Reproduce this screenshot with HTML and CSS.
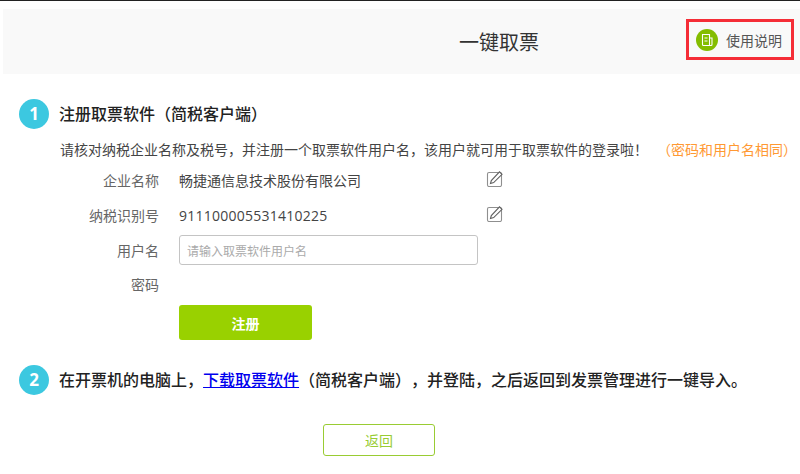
FILE: index.html
```html
<!DOCTYPE html>
<html lang="zh-CN">
<head>
<meta charset="utf-8">
<title>一键取票</title>
<link rel="stylesheet" href="styles.css">
</head>
<body>
<div class="page">
  <header class="header">
    <h1 class="title">一键取票</h1>
    <a class="help">
      <svg class="help-icon" viewBox="0 0 22 22" width="22" height="22" aria-hidden="true">
        <circle cx="11" cy="11" r="11" fill="#84bd00"/>
        <path d="M6.500 5.500h7v11h-6a1 1 0 0 1-1-1z M13.500 9h2.500v6.500a1 1 0 0 1-1 1h-1.500" fill="none" stroke="#fff" stroke-width="1.100"/>
        <path d="M8.500 9h3M8.500 12h3" stroke="#fff" stroke-width="1.100"/>
      </svg>
      <span>使用说明</span>
    </a>
  </header>

  <section class="step step-one">
    <div class="step-head">
      <span class="badge">1</span>
      <h2 class="step-title">注册取票软件（简税客户端）</h2>
    </div>
    <p class="desc">请核对纳税企业名称及税号<span class="punct">，</span>并注册一个取票软件用户名<span class="punct">，</span>该用户就可用于取票软件的登录啦<span class="punct">！</span><span class="note">（密码和用户名相同）</span></p>
    <div class="form">
      <div class="row row-company">
        <span class="label">企业名称</span>
        <span class="value">畅捷通信息技术股份有限公司</span>
        <svg class="edit" viewBox="0 0 17 17" width="17" height="17" aria-hidden="true">
          <rect x="1.500" y="2.500" width="14" height="14" rx="1.500" fill="#fff" stroke="#8f8f8f" stroke-width="1.100"/>
          <path d="M4.500 13.500l.8-3L13.500 1.800l2.500 2.500-8.300 8.300z" fill="#fff" stroke="#5f5f5f" stroke-width="1.100"/>
        </svg>
      </div>
      <div class="row row-tax">
        <span class="label">纳税识别号</span>
        <span class="value">911100005531410225</span>
        <svg class="edit" viewBox="0 0 17 17" width="17" height="17" aria-hidden="true">
          <rect x="1.500" y="2.500" width="14" height="14" rx="1.500" fill="#fff" stroke="#8f8f8f" stroke-width="1.100"/>
          <path d="M4.500 13.500l.8-3L13.500 1.800l2.500 2.500-8.300 8.300z" fill="#fff" stroke="#5f5f5f" stroke-width="1.100"/>
        </svg>
      </div>
      <div class="row row-user">
        <span class="label">用户名</span>
        <input class="input" type="text" placeholder="请输入取票软件用户名">
      </div>
      <div class="row row-pass">
        <span class="label">密码</span>
      </div>
      <div class="row row-submit">
        <span class="label"></span>
        <button class="submit" type="button">注册</button>
      </div>
    </div>
  </section>

  <section class="step step-two">
    <div class="step-head">
      <span class="badge">2</span>
      <h2 class="step-title">在开票机的电脑上<span class="punct">，</span><a class="link" href="#">下载取票软件</a>（简税客户端）<span class="punct">，</span>并登陆<span class="punct">，</span>之后返回到发票管理进行一键导入。</h2>
    </div>
  </section>

  <div class="footer">
    <button class="back" type="button">返回</button>
  </div>
</div>
</body>
</html>
```
FILE: styles.css
```css
* { box-sizing: border-box; }
html, body { margin: 0; padding: 0; background: #fff; }
body {
  width: 800px;
  height: 474px;
  overflow: hidden;
  font-family: "Noto Sans CJK SC", "Liberation Sans", sans-serif;
  color: #333;
  text-spacing-trim: space-all;
}
.page {
  border-top: 1px solid #222;
  padding-top: 8px;
  padding-left: 3px;
}
.header {
  height: 65px;
  background: #f9f9f9;
  display: flex;
  align-items: flex-start;
  justify-content: flex-end;
}
.title {
  margin: 0 147px 0 0;
  font-size: 20px;
  font-weight: 400;
  line-height: 65px;
  color: #333;
  width: 80px;
  white-space: nowrap;
}
.help {
  margin-top: 10px;
  margin-right: 6px;
  width: 108px;
  height: 41px;
  border: 3px solid #f52d37;
  display: flex;
  align-items: center;
  padding-left: 7px;
  gap: 8px;
  font-size: 14px;
  color: #555;
  white-space: nowrap;
}
.help-icon { flex: none; }
.step { padding-left: 16px; }
.step-one { margin-top: 25px; }
.step-head {
  display: flex;
  align-items: center;
  gap: 10px;
  height: 30px;
}
.badge {
  flex: none;
  width: 30px;
  height: 30px;
  border-radius: 50%;
  background: #3cc8e0;
  color: #fff;
  font: 700 17px/30px "Open Sans", "Liberation Sans", sans-serif;
  text-align: center;
}
.step-title {
  margin: 0;
  padding-bottom: 2px;
  font-size: 16px;
  font-weight: 500;
  color: #222;
  white-space: nowrap;
}
.punct { font-family: "Noto Sans CJK TC", "Noto Sans CJK SC", sans-serif; }
.desc {
  margin: 10px 0 0 41px;
  font-size: 14px;
  line-height: 20px;
  color: #444;
  white-space: nowrap;
}
.note { color: #ff9933; margin-left: 9px; }
.form { margin-top: 9px; margin-left: -16px; }
.row {
  display: flex;
  align-items: center;
  font-size: 14px;
  color: #666;
}
.row-company { height: 24px; }
.row-tax { height: 24px; margin-top: 11px; }
.row-user { height: 30px; margin-top: 8px; }
.row-pass { height: 20px; margin-top: 9px; }
.row-submit { height: 35px; margin-top: 11px; }
.label {
  flex: none;
  width: 156px;
  text-align: right;
  margin-right: 20px;
  white-space: nowrap;
}
.value {
  flex: none;
  width: 307px;
  color: #444;
  white-space: nowrap;
}
.row-tax .value {
  font-family: "Open Sans", "Liberation Sans", sans-serif;
  letter-spacing: 0.25px;
}
.edit { flex: none; margin-bottom: 4px; }
.input {
  width: 299px;
  height: 30px;
  border: 1px solid #c4c4c4;
  border-radius: 3px;
  padding: 0 7px;
  font: 12px "Noto Sans CJK SC", sans-serif;
  background: #fff;
  outline: none;
}
.input::placeholder { color: #aaa; opacity: 1; }
.submit {
  width: 133px;
  height: 35px;
  margin: 0;
  border: 0;
  border-radius: 3px;
  background: #99d100;
  color: #fff;
  font: 700 14px "Noto Sans CJK SC", sans-serif;
}
.step-two { margin-top: 25px; }
.link { color: #0000ee; text-decoration: underline; }
.footer {
  display: flex;
  padding-left: 320px;
  margin-top: 29px;
}
.back {
  width: 112px;
  height: 32px;
  margin: 0;
  border: 1px solid #99cc33;
  border-radius: 3px;
  background: #fff;
  color: #99cc33;
  font: 14px "Noto Sans CJK SC", sans-serif;
}
```
